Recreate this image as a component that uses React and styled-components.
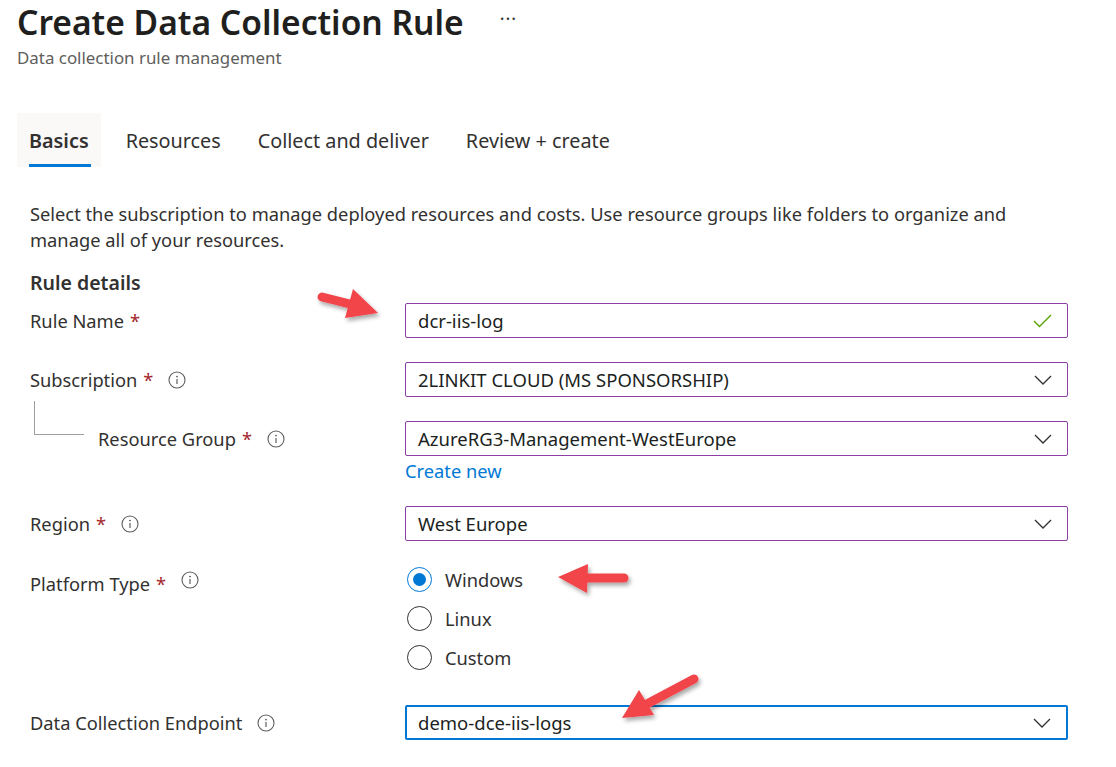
import React from "react";
import styled, { createGlobalStyle } from "styled-components";

const GlobalStyle = createGlobalStyle`
  body {
    margin: 0;
    background: #ffffff;
    font-family: "Noto Sans", "Open Sans", sans-serif;
    color: #323130;
  }
`;

const Page = styled.div`
  position: relative;
  width: 1116px;
  height: 767px;
  overflow: hidden;
  background: #fff;
`;

const Header = styled.header`
  padding-left: 17px;
`;

const TitleRow = styled.div`
  display: flex;
  align-items: center;
  gap: 36px;
  height: 44px;
`;

const Title = styled.h1`
  margin: 0;
  font-size: 33.6px;
  font-weight: 600;
  line-height: 44px;
  color: #201f1e;
`;

const More = styled.span`
  font-size: 18px;
  color: #323130;
  letter-spacing: 1px;
  margin-top: -8px;
`;

const Subtitle = styled.div`
  margin-top: 3px;
  font-size: 16.9px;
  line-height: 22px;
  color: #605e5c;
`;

const Tabs = styled.nav`
  display: flex;
  gap: 13px;
  margin-top: 44px;
  margin-left: 17px;
  height: 54px;
`;

const Tab = styled.div`
  position: relative;
  display: flex;
  align-items: center;
  padding: 0 12px;
  font-size: 19.8px;
  color: #323130;
  font-weight: ${p => (p.$active ? 600 : 400)};
  background: ${p => (p.$active ? "#faf9f8" : "transparent")};

  &::after {
    content: "";
    display: ${p => (p.$active ? "block" : "none")};
    position: absolute;
    left: 12px;
    right: 10px;
    bottom: 0;
    height: 3px;
    background: #0078d4;
  }
`;

const Content = styled.main`
  padding-left: 30px;
`;

const Description = styled.p`
  margin: 34px 0 0;
  max-width: 1040px;
  font-size: 18.3px;
  line-height: 26px;
  color: #323130;
`;

const SectionTitle = styled.h2`
  margin: 18px 0 0;
  font-size: 19.5px;
  font-weight: 600;
  line-height: 24px;
  color: #323130;
`;

const Form = styled.div`
  display: flex;
  flex-direction: column;
  margin-top: 8px;
`;

const Row = styled.div`
  display: grid;
  grid-template-columns: 375px 663px;
  margin-top: ${p => p.$top || 0}px;
`;

const LabelCell = styled.div`
  display: flex;
  align-items: ${p => (p.$top ? "flex-start" : "center")};
  padding-top: ${p => p.$top || 0}px;
  height: ${p => (p.$top ? "auto" : "35px")};
  font-size: 18.3px;
  color: #323130;
`;

const Connector = styled.span`
  align-self: flex-start;
  flex: none;
  width: 49px;
  height: 33px;
  margin: -20px 14px 0 4px;
  border-left: 1px solid #a19f9d;
  border-bottom: 1px solid #a19f9d;
`;

const Req = styled.span`
  color: #a4262c;
  margin-left: 6px;
`;

const InfoWrap = styled.span`
  display: inline-flex;
  margin-left: 15px;
`;

const Box = styled.div`
  box-sizing: border-box;
  display: flex;
  align-items: center;
  justify-content: space-between;
  height: 35px;
  padding: 0 15px 0 ${p => (p.$focused ? 11 : 12)}px;
  border: ${p => (p.$focused ? "2px solid #0078d4" : "1px solid #8b3fa5")};
  border-radius: 2px;
  font-size: 18.5px;
  color: #201f1e;
`;

const CreateLink = styled.a`
  display: block;
  margin-top: 4px;
  font-size: 18.3px;
  line-height: 22px;
  color: #0078d4;
  cursor: pointer;
`;

const RadioGroup = styled.div`
  display: flex;
  flex-direction: column;
  gap: 13px;
`;

const RadioItem = styled.label`
  display: flex;
  align-items: center;
  gap: 13px;
  height: 26px;
  font-size: 18.3px;
  color: #323130;
`;

const RadioCircle = styled.span`
  box-sizing: border-box;
  display: flex;
  align-items: center;
  justify-content: center;
  width: 25px;
  height: 25px;
  margin-left: 2px;
  border-radius: 50%;
  border: 1px solid ${p => (p.$checked ? "#0078d4" : "#323130")};

  &::after {
    content: "";
    display: ${p => (p.$checked ? "block" : "none")};
    width: 13px;
    height: 13px;
    border-radius: 50%;
    background: #0078d4;
  }
`;

const Overlay = styled.svg`
  position: absolute;
  top: 0;
  left: 0;
  pointer-events: none;
`;

const InfoIcon = () => (
  <svg width="18" height="18" viewBox="0 0 18 18">
    <circle cx="9" cy="9" r="8" fill="none" stroke="#605e5c" strokeWidth="1.1" />
    <circle cx="9" cy="5.6" r="0.9" fill="#605e5c" />
    <line x1="9" y1="8" x2="9" y2="13" stroke="#605e5c" strokeWidth="1.2" />
  </svg>
);

const Chevron = () => (
  <svg width="18" height="10" viewBox="0 0 18 10">
    <polyline points="1,1 9,9 17,1" fill="none" stroke="#323130" strokeWidth="1.3" />
  </svg>
);

const Check = () => (
  <svg width="19" height="14" viewBox="0 0 19 14">
    <polyline points="1,7 6.5,12.5 18,1" fill="none" stroke="#57a300" strokeWidth="1.4" />
  </svg>
);

const Label = ({ text, required, info, indent, top }) => (
  <LabelCell $top={top}>
    {indent && <Connector />}
    {text}
    {required && <Req>*</Req>}
    {info && (
      <InfoWrap>
        <InfoIcon />
      </InfoWrap>
    )}
  </LabelCell>
);

const Arrow = ({ tail, neck, head }) => (
  <g filter="url(#shadow)">
    <line
      x1={tail[0]}
      y1={tail[1]}
      x2={neck[0]}
      y2={neck[1]}
      stroke="#f2444a"
      strokeWidth="9"
      strokeLinecap="round"
    />
    <polygon points={head.map(p => p.join(",")).join(" ")} fill="#f2444a" />
  </g>
);

const tabs = ["Basics", "Resources", "Collect and deliver", "Review + create"];

export default function App() {
  return (
    <Page>
      <GlobalStyle />
      <Header>
        <TitleRow>
          <Title>Create Data Collection Rule</Title>
          <More>···</More>
        </TitleRow>
        <Subtitle>Data collection rule management</Subtitle>
      </Header>

      <Tabs>
        {tabs.map((t, i) => (
          <Tab key={t} $active={i === 0}>
            {t}
          </Tab>
        ))}
      </Tabs>

      <Content>
        <Description>
          Select the subscription to manage deployed resources and costs. Use resource groups like
          folders to organize and manage all of your resources.
        </Description>
        <SectionTitle>Rule details</SectionTitle>

        <Form>
          <Row>
            <Label text="Rule Name" required />
            <Box>
              dcr-iis-log
              <Check />
            </Box>
          </Row>

          <Row $top={24}>
            <Label text="Subscription" required info />
            <Box>
              2LINKIT CLOUD (MS SPONSORSHIP)
              <Chevron />
            </Box>
          </Row>

          <Row $top={24}>
            <Label text="Resource Group" required info indent />
            <div>
              <Box>
                AzureRG3-Management-WestEurope
                <Chevron />
              </Box>
              <CreateLink>Create new</CreateLink>
            </div>
          </Row>

          <Row $top={24}>
            <Label text="Region" required info />
            <Box>
              West Europe
              <Chevron />
            </Box>
          </Row>

          <Row $top={25}>
            <Label text="Platform Type" required info top={5} />
            <RadioGroup>
              <RadioItem>
                <RadioCircle $checked />
                Windows
              </RadioItem>
              <RadioItem>
                <RadioCircle />
                Linux
              </RadioItem>
              <RadioItem>
                <RadioCircle />
                Custom
              </RadioItem>
            </RadioGroup>
          </Row>

          <Row $top={35}>
            <Label text="Data Collection Endpoint" info />
            <Box $focused>
              demo-dce-iis-logs
              <Chevron />
            </Box>
          </Row>
        </Form>
      </Content>

      <Overlay width="1116" height="767">
        <defs>
          <filter id="shadow" x="-20%" y="-20%" width="160%" height="160%">
            <feDropShadow dx="2" dy="3" stdDeviation="2" floodColor="#000" floodOpacity="0.35" />
          </filter>
        </defs>
        <Arrow tail={[322, 297]} neck={[350, 304]} head={[[353, 289], [378, 313], [345, 318]]} />
        <Arrow tail={[624, 578]} neck={[584, 578]} head={[[558, 577], [588, 564], [587, 593]]} />
        <Arrow tail={[694, 679]} neck={[645, 705]} head={[[622, 718], [639, 690], [654, 715]]} />
      </Overlay>
    </Page>
  );
}
